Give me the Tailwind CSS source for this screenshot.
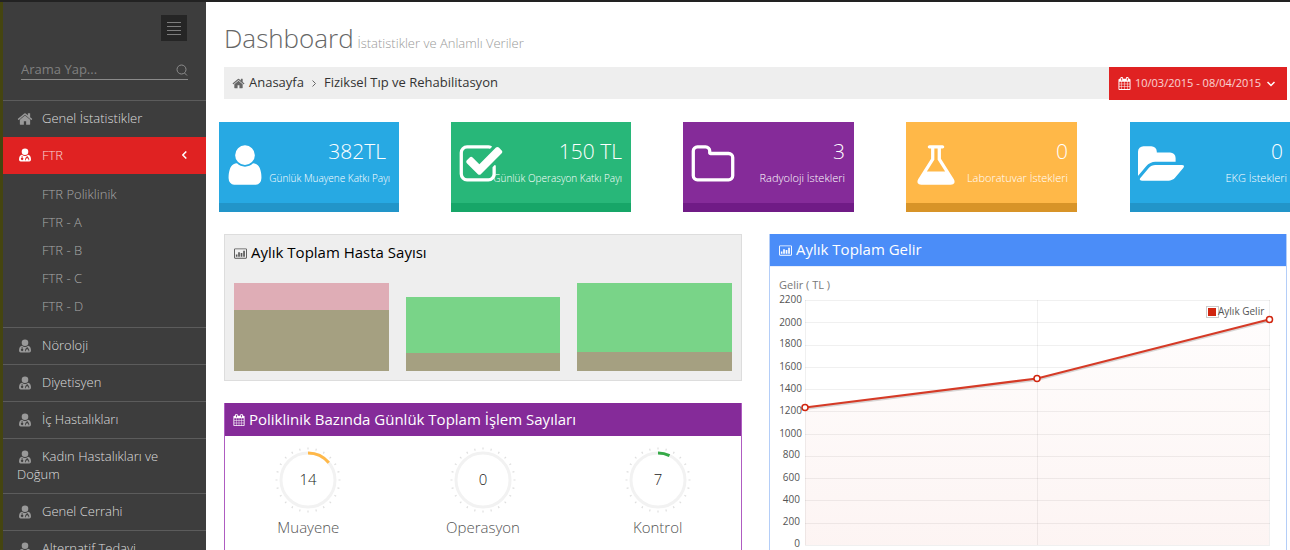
<!DOCTYPE html>
<html lang="tr">
<head>
<meta charset="utf-8">
<title>Dashboard</title>
<script src="https://cdn.jsdelivr.net/npm/@tailwindcss/browser@4"></script>
</head>
<body class="h-screen overflow-hidden bg-white font-['Open_Sans','Noto_Sans',sans-serif] text-[13px] text-black">
<svg class="hidden" aria-hidden="true">
  <symbol id="home" viewBox="0 0 1792 1792"><path d="M1472 992v480q0 26-19 45t-45 19h-384v-384h-256v384h-384q-26 0-45-19t-19-45v-480q0-1 .5-3t.5-3l575-474 575 474q1 2 1 6zm223-69l-62 74q-8 9-21 11h-3q-13 0-21-7l-692-577-692 577q-12 8-24 7-13-2-21-11l-62-74q-8-10-7-23.5t11-21.5l719-599q32-26 76-26t76 26l244 204v-195q0-14 9-23t23-9h192q14 0 23 9t9 23v408l219 182q10 8 11 21.5t-7 23.5z"/></symbol>
  <symbol id="user" viewBox="0 0 1792 1792"><path d="M1536 1399q0 109-62.5 187t-150.5 78h-854q-88 0-150.5-78t-62.5-187q0-85 8.5-160.5t31.5-152 58.5-131 94-89 134.5-34.5q131 128 313 128t313-128q76 0 134.5 34.5t94 89 58.5 131 31.5 152 8.5 160.5zm-256-887q0 159-112.5 271.5t-271.5 112.5-271.5-112.5-112.5-271.5 112.5-271.5 271.5-112.5 271.5 112.5 112.5 271.5z"/></symbol>
  <symbol id="check" viewBox="0 0 1792 1792"><path d="M1472 930v318q0 119-84.5 203.5t-203.5 84.5h-832q-119 0-203.5-84.5t-84.5-203.5v-832q0-119 84.5-203.5t203.5-84.5h832q63 0 117 25 15 7 18 23 3 17-9 29l-49 49q-10 10-23 10-3 0-9-2-23-6-45-6h-832q-66 0-113 47t-47 113v832q0 66 47 113t113 47h832q66 0 113-47t47-113v-254q0-13 9-22l64-64q10-10 23-10 6 0 12 3 20 8 20 29zm231-489l-814 814q-24 24-57 24t-57-24l-430-430q-24-24-24-57t24-57l110-110q24-24 57-24t57 24l263 263 647-647q24-24 57-24t57 24l110 110q24 24 24 57t-24 57z"/></symbol>
  <symbol id="folder" viewBox="0 0 1792 1792"><path d="M1600 1312v-704q0-40-28-68t-68-28h-704q-40 0-68-28t-28-68v-64q0-40-28-68t-68-28h-320q-40 0-68 28t-28 68v960q0 40 28 68t68 28h1216q40 0 68-28t28-68zm128-704v704q0 92-66 158t-158 66h-1216q-92 0-158-66t-66-158v-960q0-92 66-158t158-66h320q92 0 158 66t66 158v32h672q92 0 158 66t66 158z"/></symbol>
  <symbol id="flask" viewBox="0 0 1792 1792"><path d="M1591 1448q56 89 21.5 152.5t-140.5 63.5h-1152q-106 0-140.5-63.5t21.5-152.5l503-793v-399h-64q-26 0-45-19t-19-45 19-45 45-19h512q26 0 45 19t19 45-19 45-45 19h-64v399zm-779-725l-272 429h712l-272-429-20-31v-436h-128v436z"/></symbol>
  <symbol id="folder-open" viewBox="0 0 1879 1792"><path d="M1879 952q0 31-31 66l-336 396q-43 51-120.5 86.5t-143.5 35.5h-1088q-34 0-60.5-13t-26.5-43q0-31 31-66l336-396q43-51 120.5-86.5t143.5-35.5h1088q34 0 60.5 13t26.5 43zm-343-344v160h-832q-94 0-197 47.5t-164 119.5l-337 396-5 6q0-4-.5-12.5t-.5-12.5v-960q0-92 66-158t158-66h320q92 0 158 66t66 158v32h544q92 0 158 66t66 158z"/></symbol>
  <symbol id="calendar" viewBox="0 0 1792 1792"><path d="M192 1664h288v-288h-288v288zm352 0h320v-288h-320v288zm-352-352h288v-320h-288v320zm352 0h320v-320h-320v320zm-352-384h288v-288h-288v288zm736 736h320v-288h-320v288zm-384-736h320v-288h-320v288zm768 736h288v-288h-288v288zm-384-352h320v-320h-320v320zm-352-864v-288q0-13-9.5-22.5t-22.5-9.5h-64q-13 0-22.5 9.5t-9.5 22.5v288q0 13 9.5 22.5t22.5 9.5h64q13 0 22.5-9.5t9.5-22.5zm736 864h288v-320h-288v320zm-384-384h320v-288h-320v288zm384 0h288v-288h-288v288zm32-480v-288q0-13-9.5-22.5t-22.5-9.5h-64q-13 0-22.5 9.5t-9.5 22.5v288q0 13 9.5 22.5t22.5 9.5h64q13 0 22.5-9.5t9.5-22.5zm384-64v1280q0 52-38 90t-90 38h-1408q-52 0-90-38t-38-90v-1280q0-52 38-90t90-38h128v-96q0-66 47-113t113-47h64q66 0 113 47t47 113v96h384v-96q0-66 47-113t113-47h64q66 0 113 47t47 113v96h128q52 0 90 38t38 90z"/></symbol>
  <symbol id="doctor" viewBox="0 0 12 14"><path fill-rule="evenodd" d="M6 .5a3.3 3.3 0 0 1 0 6.6a3.3 3.3 0 0 1 0-6.6zM3 6.7Q6 9.3 9 6.7Q12 7.2 12 11.5Q12 13.4 10.3 13.4H1.7Q0 13.4 0 11.5Q0 7.2 3 6.7zM2.7 7.7V9.7A1.2 1.2 0 1 0 3.5 9.7V8.2ZM7.5 8.5V9.1A2 2 0 0 0 6.2 11V12.3H7V11A1.3 1.3 0 0 1 9.4 11V12.3H10.2V11A2 2 0 0 0 8.700 9.1V8Z"/></symbol>
  <symbol id="chart" viewBox="0 0 14 12"><path fill-rule="evenodd" d="M1.2 0H12.8Q14 0 14 1.2V9.8Q14 11 12.8 11H1.2Q0 11 0 9.8V1.2Q0 0 1.2 0ZM1 1V10H13V1ZM2 6.500H3.700V9H2ZM4.500 4H6.300V9H4.500ZM7.200 5H9V9H7.200ZM9.900 2.500H11.700V9H9.900Z"/></symbol>
</svg>

<div class="flex h-full flex-col border-t-2 border-[#222222]">
  <div class="flex min-h-0 flex-1">
    <aside class="w-[206px] shrink-0 overflow-hidden border-l-[3px] border-[#45450f] bg-[#3d3d3d]">
      <div class="flex justify-end pt-[13px] pr-[19px]">
        <button type="button" aria-label="Menü" class="flex size-[26px] items-center justify-center bg-[#252525]">
          <svg class="h-[13px] w-[14px] fill-[#7d7d7d]" viewBox="0 0 14 13"><path d="M0 0h14v1H0zM0 4h14v1H0zM0 8h14v1H0zM0 12h14v1H0z"/></svg>
        </button>
      </div>
      <form class="mx-[18px] mt-[19px] mb-[20px] flex h-5 items-center border-b border-[#8a8a8a]">
        <input type="text" aria-label="Arama" placeholder="Arama Yap..." class="h-[18px] w-full min-w-0 flex-1 bg-transparent text-[13px] text-gray-300 outline-none placeholder:text-[#808080]">
        <button type="button" aria-label="Ara"><svg class="size-3 fill-none stroke-[#8c8c8c]" viewBox="0 0 12 12"><circle cx="5.500" cy="5.500" r="4.500"/><path d="M8.500 9l2.500 2.500"/></svg></button>
      </form>
      <nav class="leading-[18px] font-light text-[#dddddd]">
        <a href="#" class="block border-t border-[#5c5c5c] pt-2 pr-3 pb-[10px] pl-[14px]"><svg class="mr-[9px] inline-block size-4 fill-[#999999] align-[-4px]"><use href="#home"/></svg>Genel İstatistikler</a>
        <a href="#" class="flex items-center border-t border-[#e02222] bg-[#e02222] pt-2 pr-[19px] pb-[10px] pl-4 text-white"><svg class="mr-[11px] h-[14px] w-3 fill-white"><use href="#doctor"/></svg><span class="flex-1 opacity-80">FTR</span><svg class="h-2 w-[5px] fill-none stroke-white stroke-[1.500]" viewBox="0 0 5 8"><path d="M4.300.5L.8 4l3.500 3.500"/></svg></a>
        <div class="pt-[6px] pb-[7px] pl-[39px] leading-[28px] text-[#a8a8a8]">
          <a href="#" class="block">FTR Poliklinik</a>
          <a href="#" class="block">FTR - A</a>
          <a href="#" class="block">FTR - B</a>
          <a href="#" class="block">FTR - C</a>
          <a href="#" class="block">FTR - D</a>
        </div>
        <a href="#" class="block border-t border-[#5c5c5c] pt-2 pr-3 pb-[10px] pl-4"><svg class="mr-[11px] inline-block h-[14px] w-3 fill-[#999999] align-[-3px]"><use href="#doctor"/></svg>Nöroloji</a>
        <a href="#" class="block border-t border-[#5c5c5c] pt-2 pr-3 pb-[10px] pl-4"><svg class="mr-[11px] inline-block h-[14px] w-3 fill-[#999999] align-[-3px]"><use href="#doctor"/></svg>Diyetisyen</a>
        <a href="#" class="block border-t border-[#5c5c5c] pt-2 pr-3 pb-[10px] pl-4"><svg class="mr-[11px] inline-block h-[14px] w-3 fill-[#999999] align-[-3px]"><use href="#doctor"/></svg>İç Hastalıkları</a>
        <a href="#" class="block border-t border-[#5c5c5c] pt-2 pr-3 pb-[10px] pl-[14px]"><svg class="mr-[11px] ml-[2px] inline-block h-[14px] w-3 fill-[#999999] align-[-3px]"><use href="#doctor"/></svg>Kadın Hastalıkları ve Doğum</a>
        <a href="#" class="block border-t border-[#5c5c5c] pt-2 pr-3 pb-[10px] pl-4"><svg class="mr-[11px] inline-block h-[14px] w-3 fill-[#999999] align-[-3px]"><use href="#doctor"/></svg>Genel Cerrahi</a>
        <a href="#" class="block border-t border-[#5c5c5c] pt-2 pr-3 pb-[10px] pl-4"><svg class="mr-[11px] inline-block h-[14px] w-3 fill-[#999999] align-[-3px]"><use href="#doctor"/></svg>Alternatif Tedavi</a>
      </nav>
    </aside>

    <main class="min-w-0 flex-1 overflow-hidden pt-[17px] pr-[3px] pl-[18px]">
      <h1 class="mb-[5px] text-[26px] leading-[38px] font-light text-[#666666]">Dashboard <small class="-ml-[3px] text-[13px] text-[#999999]">İstatistikler ve Anlamlı Veriler</small></h1>
      <div class="flex h-[33px] items-start bg-white">
        <div class="flex h-8 flex-1 items-center bg-[#eeeeee] pl-2 text-[#333333]">
          <svg class="mr-1 size-[13px] fill-[#666666]"><use href="#home"/></svg>
          <a href="#">Anasayfa</a>
          <svg class="mx-2 h-[7px] w-1 fill-none stroke-[#666666]" viewBox="0 0 4 7"><path d="M.5.500L3.500 3.500L.5 6.500"/></svg>
          <a href="#">Fiziksel Tıp ve Rehabilitasyon</a>
        </div>
        <button type="button" class="flex h-[33px] items-center bg-[#e02222] pr-3 pl-[9px] text-[11px] text-white/80">
          <svg class="mr-1 size-[13px] fill-white"><use href="#calendar"/></svg>10/03/2015 - 08/04/2015
          <svg class="ml-[6px] h-[6px] w-2 fill-none stroke-white stroke-[1.500]" viewBox="0 0 8 6"><path d="M.5 1L4 4.500L7.500 1"/></svg>
        </button>
      </div>

      <section class="mt-[22px] -ml-[5px] flex gap-[52px] font-light text-white">
        <article class="flex h-[90px] w-[180px] shrink-0 border-b-9 border-[#2295c9] bg-[#27a9e3]">
          <svg class="mt-[20px] ml-[3px] size-[46px] shrink-0 fill-white"><use href="#user"/></svg>
          <div class="min-w-0 flex-1 pt-4 pr-[9px] text-right whitespace-nowrap"><div class="pr-1 text-[21px] leading-[26px]">382TL</div><div class="mt-1 -ml-4 text-[10px] leading-[20px]">Günlük Muayene Katkı Payı</div></div>
        </article>
        <article class="flex h-[90px] w-[180px] shrink-0 border-b-9 border-[#17a668] bg-[#28b779]">
          <svg class="mt-[20px] ml-[7px] size-[46px] shrink-0 fill-white"><use href="#check"/></svg>
          <div class="min-w-0 flex-1 pt-4 pr-[9px] text-right whitespace-nowrap"><div class="text-[21px] leading-[26px]">150 TL</div><div class="mt-1 -ml-8 text-[10px] leading-[20px]">Günlük Operasyon Katkı Payı</div></div>
        </article>
        <article class="flex h-[90px] w-[171px] shrink-0 border-b-9 border-[#701b86] bg-[#852b99]">
          <svg class="mt-[20px] ml-[7px] size-[46px] shrink-0 fill-white"><use href="#folder"/></svg>
          <div class="min-w-0 flex-1 pt-4 pr-[9px] text-right whitespace-nowrap"><div class="text-[21px] leading-[26px]">3</div><div class="mt-1 text-[11px] leading-[20px]">Radyoloji İstekleri</div></div>
        </article>
        <article class="flex h-[90px] w-[171px] shrink-0 border-b-9 border-[#d89428] bg-[#ffb848]">
          <svg class="mt-[20px] ml-[7px] size-[46px] shrink-0 fill-white"><use href="#flask"/></svg>
          <div class="min-w-0 flex-1 pt-4 pr-[9px] text-right whitespace-nowrap"><div class="text-[21px] leading-[26px]">0</div><div class="mt-1 -ml-2 text-[11px] leading-[20px]">Laboratuvar İstekleri</div></div>
        </article>
        <article class="ml-px flex h-[90px] w-[166px] shrink-0 border-b-9 border-[#2295c9] bg-[#27a9e3]">
          <svg class="mt-[20px] ml-2 size-[46px] shrink-0 fill-white"><use href="#folder-open"/></svg>
          <div class="min-w-0 flex-1 pt-4 pr-[9px] text-right whitespace-nowrap"><div class="pr-1 text-[21px] leading-[26px]">0</div><div class="mt-1 text-[11px] leading-[20px]">EKG İstekleri</div></div>
        </article>
      </section>

      <div class="mt-[22px] grid grid-cols-2 items-start gap-[27px]">
        <div>
          <section class="border border-[#dddddd] bg-[#eeeeee] px-[9px] pb-[9px]">
            <h2 class="flex h-[34px] items-center text-[15px]"><svg class="mt-[3px] mr-1 h-3 w-[13px] fill-[#555555]"><use href="#chart"/></svg>Aylık Toplam Hasta Sayısı</h2>
            <div class="mt-[14px] grid h-[88px] grid-cols-3 items-end gap-[17px]">
              <div class="flex flex-col justify-end bg-[#dfadb6]" style="height:100%"><div class="bg-[#a5a081]" style="height:69%"></div></div>
              <div class="flex flex-col justify-end bg-[#79d488]" style="height:84%"><div class="bg-[#a5a081]" style="height:24%"></div></div>
              <div class="flex flex-col justify-end bg-[#79d488]" style="height:100%"><div class="bg-[#a5a081]" style="height:22%"></div></div>
            </div>
          </section>
          <section class="mt-[22px] border border-t-0 border-[#af5cc1] bg-white pb-5">
            <h2 class="flex h-[33px] items-center bg-[#852b99] pl-2 text-[15px] text-white"><svg class="mr-1 size-3 fill-white"><use href="#calendar"/></svg>Poliklinik Bazında Günlük Toplam İşlem Sayıları</h2>
            <div class="-mx-1 grid grid-cols-3 pt-[9px] text-center text-[15px] font-light text-[#555555]">
              <div><svg class="mx-auto size-[70px]" viewBox="0 0 70 70"><g fill="none"><circle cx="35" cy="35" r="31.500" stroke="#dfdfdf" stroke-width="2" pathLength="240" stroke-dasharray="1.500 8.500" stroke-dashoffset=".75"/><circle cx="35" cy="35" r="27" stroke="#f2f2f2" stroke-width="3"/><circle cx="35" cy="35" r="27" stroke="#ffb848" stroke-width="3" pathLength="100" stroke-dasharray="14 86" transform="rotate(-90 35 35)"/></g><text x="35" y="40" text-anchor="middle" font-size="15" fill="#222">14</text></svg><div class="mt-px leading-[22px]">Muayene</div></div>
              <div><svg class="mx-auto size-[70px]" viewBox="0 0 70 70"><g fill="none"><circle cx="35" cy="35" r="31.500" stroke="#dfdfdf" stroke-width="2" pathLength="240" stroke-dasharray="1.500 8.500" stroke-dashoffset=".75"/><circle cx="35" cy="35" r="27" stroke="#f2f2f2" stroke-width="3"/></g><text x="35" y="40" text-anchor="middle" font-size="15" fill="#222">0</text></svg><div class="mt-px leading-[22px]">Operasyon</div></div>
              <div><svg class="mx-auto size-[70px]" viewBox="0 0 70 70"><g fill="none"><circle cx="35" cy="35" r="31.500" stroke="#dfdfdf" stroke-width="2" pathLength="240" stroke-dasharray="1.500 8.500" stroke-dashoffset=".75"/><circle cx="35" cy="35" r="27" stroke="#f2f2f2" stroke-width="3"/><circle cx="35" cy="35" r="27" stroke="#35aa47" stroke-width="3" pathLength="100" stroke-dasharray="7 93" transform="rotate(-90 35 35)"/></g><text x="35" y="40" text-anchor="middle" font-size="15" fill="#222">7</text></svg><div class="mt-px leading-[22px]">Kontrol</div></div>
            </div>
          </section>
        </div>

        <section class="border border-t-0 border-[#b4cef8] bg-white">
          <h2 class="flex h-8 items-center bg-[#4b8df8] pb-[2px] pl-[9px] text-[15px] text-white"><svg class="mt-[3px] mr-1 h-3 w-[13px] fill-white"><use href="#chart"/></svg>Aylık Toplam Gelir</h2>
          <svg class="w-full" viewBox="0 0 516 310">
            <defs>
              <linearGradient id="area" x1="0" y1="0" x2="0" y2="1"><stop offset="0" stop-color="#d12610" stop-opacity=".01"/><stop offset="1" stop-color="#d12610" stop-opacity=".05"/></linearGradient>
            </defs>
            <path d="M0 .5H516" stroke="#e8eefa"/>
            <path d="M35 141.500L267 112.500L499 53.500V279H35Z" fill="url(#area)"/>
            <g stroke="#000" stroke-opacity=".06" fill="none"><path d="M35 34.500H500M35 56.500H500M35 79.500H500M35 101.500H500M35 123.500H500M35 145.500H500M35 168.500H500M35 190.500H500M35 212.500H500M35 234.500H500M35 257.500H500M35 279.500H500M35.500 34V279M267.500 34V279M499.500 34V279"/></g>
            <path d="M35 143L267 114L499 55" fill="none" stroke="#000" stroke-opacity=".15" stroke-width="2"/>
            <path d="M35 141.500L267 112.500L499 53.500" fill="none" stroke="#d53a26" stroke-width="2"/>
            <g fill="#fff" stroke="#d12610" stroke-width="1.500"><circle cx="35" cy="141.500" r="3"/><circle cx="267" cy="112.500" r="3"/><circle cx="499.500" cy="53.500" r="3"/></g>
            <text x="9" y="23" font-size="11" fill="#777">Gelir ( TL )</text>
            <g font-size="10" fill="#545454" text-anchor="end"><text x="32" y="37">2200</text><text x="32" y="60">2000</text><text x="32" y="81">1800</text><text x="32" y="104">1600</text><text x="32" y="126">1400</text><text x="32" y="148">1200</text><text x="32" y="171">1000</text><text x="30" y="192">800</text><text x="30" y="215">600</text><text x="30" y="237">400</text><text x="30" y="259">200</text><text x="30" y="281">0</text></g>
            <rect x="436.500" y="40.500" width="12" height="11" fill="#fff" stroke="#ccc"/><rect x="438" y="42" width="8" height="8" fill="#d12610"/>
            <text x="448" y="49" font-size="10" fill="#545454">Aylık Gelir</text>
          </svg>
        </section>
      </div>
    </main>
  </div>
</div>
</body>
</html>
